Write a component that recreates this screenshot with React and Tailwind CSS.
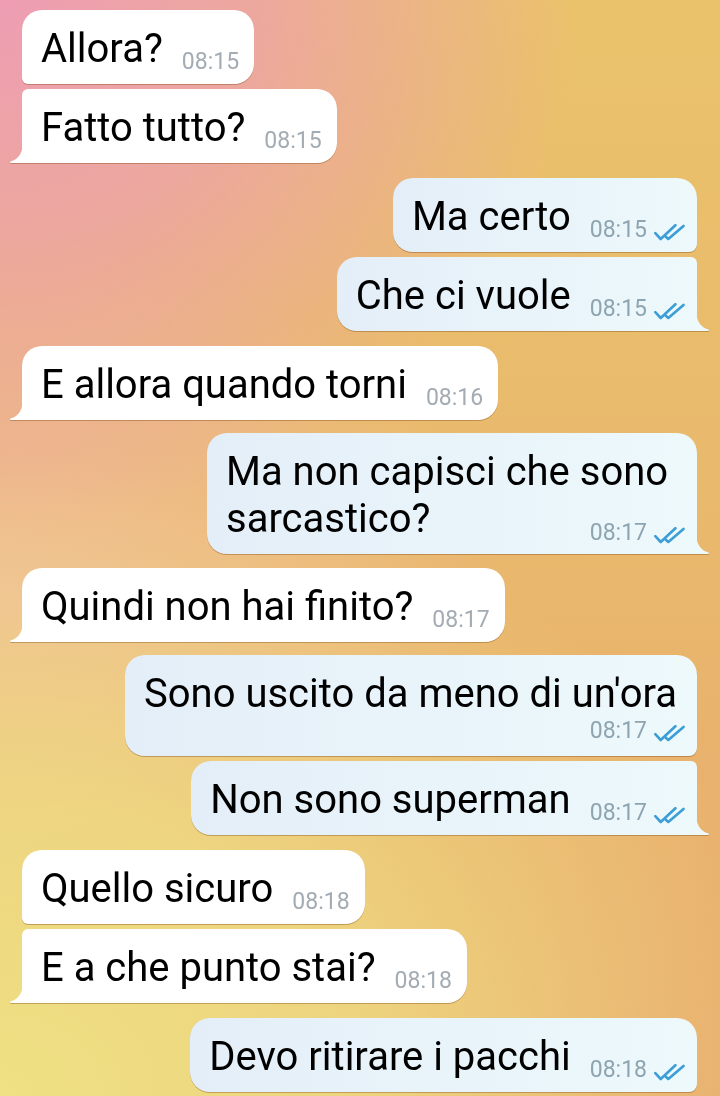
import React from "react";

function Check() {
  return (
    <svg width="31" height="17" viewBox="0 0 31 17" className="ml-[7px] mb-[2px]" fill="none">
      <path d="M1.3 9.2 L6.7 15 L21.4 1.2" stroke="#3c9ed6" strokeWidth="2.6" strokeLinecap="round" strokeLinejoin="round" />
      <path d="M11.6 12.5 L14.3 15 L29.5 1.9" stroke="#3c9ed6" strokeWidth="2.6" strokeLinecap="round" strokeLinejoin="round" />
    </svg>
  );
}

function Time({ t, out, extra = "" }) {
  return (
    <span
      className={`flex shrink-0 items-end text-[23px] leading-[27px] whitespace-nowrap ${
        out ? "text-[#8ea5b1]" : "text-[#a3abb3]"
      } ${extra}`}
    >
      {t}
      {out && <Check />}
    </span>
  );
}

function Tail({ out }) {
  if (out) {
    return (
      <svg width="14" height="22" viewBox="0 0 14 22" className="absolute bottom-0 -right-[13px]">
        <path d="M0 0 Q0 17 12.5 20.6 Q14 21.3 12.2 22 L0 22 Z" fill="#eef9fc" />
      </svg>
    );
  }
  return (
    <svg width="14" height="22" viewBox="0 0 14 22" className="absolute bottom-0 -left-[13px]">
      <path d="M14 0 Q14 17 1.5 20.6 Q0 21.3 1.8 22 L14 22 Z" fill="#ffffff" />
    </svg>
  );
}

function Bubble({ m }) {
  const { out, lines, time, tail, first, last, mt, layout, w } = m;
  let radius;
  if (!out) {
    radius = `rounded-tr-[20px] rounded-br-[20px] ${first ? "rounded-tl-[20px]" : "rounded-tl-[6px]"} ${
      tail ? "rounded-bl-none" : last ? "rounded-bl-[20px]" : "rounded-bl-[6px]"
    }`;
  } else {
    radius = `rounded-tl-[20px] rounded-bl-[20px] ${first ? "rounded-tr-[20px]" : "rounded-tr-[6px]"} ${
      tail ? "rounded-br-none" : last ? "rounded-br-[20px]" : "rounded-br-[8px]"
    }`;
  }
  const bg = out ? "bg-linear-to-r from-[#e3eef8] to-[#eef9fc]" : "bg-white";
  const pr = out ? "pr-[12px]" : "pr-[15px]";

  let content;
  if (layout === "multi") {
    content = (
      <div>
        <div className="text-[40px] leading-[47px]">{lines[0]}</div>
        <div className="flex items-end justify-between">
          <span className="text-[40px] leading-[47px]">{lines[1]}</span>
          <Time t={time} out={out} extra="-mb-[4px]" />
        </div>
      </div>
    );
  } else if (layout === "below") {
    content = (
      <div>
        <div className="text-[40px] leading-[47px] pr-[8px]">{lines[0]}</div>
        <div className="flex justify-end">
          <Time t={time} out={out} />
        </div>
      </div>
    );
  } else {
    content = (
      <div className="flex items-end">
        <span className="text-[40px] leading-[47px] whitespace-nowrap">{lines[0]}</span>
        <Time t={time} out={out} extra="ml-[19px] -mb-[3px]" />
      </div>
    );
  }

  return (
    <div className={`flex ${out ? "justify-end pr-[23px]" : "justify-start pl-[22px]"} ${mt}`}>
      <div className="relative drop-shadow-[0_1px_0.6px_rgba(120,70,20,0.38)]">
        <div className={`${bg} ${radius} ${w || ""} pl-[19px] ${pr} pt-[15px] pb-[12px] text-black`}>{content}</div>
        {tail && <Tail out={out} />}
      </div>
    </div>
  );
}

const messages = [
  { out: false, lines: ["Allora?"], time: "08:15", first: true, last: false, tail: false, mt: "mt-[10px]" },
  { out: false, lines: ["Fatto tutto?"], time: "08:15", first: false, last: true, tail: true, mt: "mt-[5px]" },
  { out: true, lines: ["Ma certo"], time: "08:15", first: true, last: false, tail: false, mt: "mt-[15px]" },
  { out: true, lines: ["Che ci vuole"], time: "08:15", first: false, last: true, tail: true, mt: "mt-[5px]" },
  { out: false, lines: ["E allora quando torni"], time: "08:16", first: true, last: true, tail: true, mt: "mt-[15px]" },
  {
    out: true,
    lines: ["Ma non capisci che sono", "sarcastico?"],
    time: "08:17",
    first: true,
    last: true,
    tail: true,
    mt: "mt-[13px]",
    layout: "multi",
    w: "w-[490px]",
  },
  { out: false, lines: ["Quindi non hai finito?"], time: "08:17", first: true, last: true, tail: true, mt: "mt-[14px]" },
  {
    out: true,
    lines: ["Sono uscito da meno di un'ora"],
    time: "08:17",
    first: true,
    last: false,
    tail: false,
    mt: "mt-[13px]",
    layout: "below",
  },
  { out: true, lines: ["Non sono superman"], time: "08:17", first: false, last: true, tail: true, mt: "mt-[5px]" },
  { out: false, lines: ["Quello sicuro"], time: "08:18", first: true, last: false, tail: false, mt: "mt-[15px]" },
  { out: false, lines: ["E a che punto stai?"], time: "08:18", first: false, last: true, tail: true, mt: "mt-[5px]" },
  { out: true, lines: ["Devo ritirare i pacchi"], time: "08:18", first: true, last: false, tail: false, mt: "mt-[15px]" },
];

export default function App() {
  return (
    <div className="w-[720px] h-[1096px] overflow-hidden font-[Roboto,sans-serif] bg-[radial-gradient(ellipse_80%_48%_at_0%_0%,#ee9db3_0%,rgba(238,157,179,0.7)_45%,rgba(238,157,179,0)_100%),radial-gradient(ellipse_115%_58%_at_0%_100%,#efe184_0%,rgba(239,225,132,0.75)_45%,rgba(239,225,132,0)_100%),radial-gradient(ellipse_70%_32%_at_0%_54%,#f0bb97_0%,rgba(240,187,151,0)_100%),linear-gradient(to_bottom,#eac26b_0%,#e9b86d_50%,#e8a86d_100%)]">
      <div className="flex flex-col">
        {messages.map((m, i) => (
          <Bubble key={i} m={m} />
        ))}
      </div>
    </div>
  );
}
